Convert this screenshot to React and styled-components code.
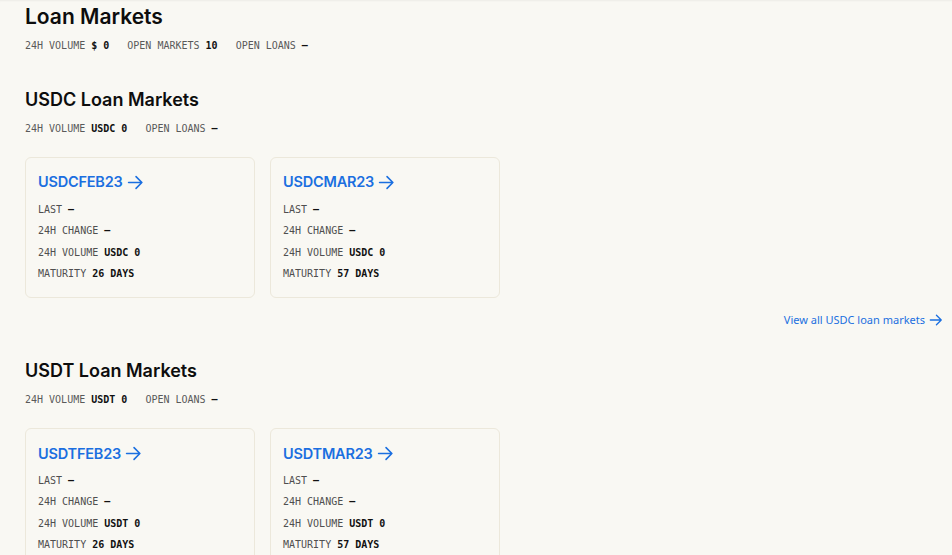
import React from "react";
import styled, { createGlobalStyle } from "styled-components";

const BLUE = "#1b6fe0";

const markets = [
  {
    coin: "USDC",
    items: [
      { name: "USDCFEB23", days: 26 },
      { name: "USDCMAR23", days: 57 },
    ],
    link: true,
  },
  {
    coin: "USDT",
    items: [
      { name: "USDTFEB23", days: 26 },
      { name: "USDTMAR23", days: 57 },
    ],
    link: false,
  },
];

const Arrow = ({ size = 16 }) => (
  <svg width={size} height={size} viewBox="0 0 16 16" fill="none">
    <path
      d="M1.5 8h12.5M8.5 2.5L14 8l-5.5 5.5"
      stroke="currentColor"
      strokeWidth="1.5"
      strokeLinecap="round"
      strokeLinejoin="round"
    />
  </svg>
);

const App = () => {
  return (
    <>
      <GlobalStyle />
      <Page>
        <PageTitle>Loan Markets</PageTitle>
        <Stats>
          <Stat>
            24H VOLUME <b>$ 0</b>
          </Stat>
          <Stat>
            OPEN MARKETS <b>10</b>
          </Stat>
          <Stat>
            OPEN LOANS <b>–</b>
          </Stat>
        </Stats>
        {markets.map((m, i) => (
          <Section key={m.coin} first={i === 0}>
            <SectionTitle>{m.coin} Loan Markets</SectionTitle>
            <Stats>
              <Stat>
                24H VOLUME <b>{m.coin} 0</b>
              </Stat>
              <Stat>
                OPEN LOANS <b>–</b>
              </Stat>
            </Stats>
            <Cards>
              {m.items.map((it) => (
                <Card key={it.name}>
                  <CardTitle>
                    {it.name}
                    <Arrow size={17} />
                  </CardTitle>
                  <Row>
                    LAST <b>–</b>
                  </Row>
                  <Row>
                    24H CHANGE <b>–</b>
                  </Row>
                  <Row>
                    24H VOLUME <b>{m.coin} 0</b>
                  </Row>
                  <Row>
                    MATURITY <b>{it.days} DAYS</b>
                  </Row>
                </Card>
              ))}
            </Cards>
            {m.link && (
              <ViewAll>
                <a>
                  View all {m.coin} loan markets
                  <Arrow size={14} />
                </a>
              </ViewAll>
            )}
          </Section>
        ))}
      </Page>
    </>
  );
};

const GlobalStyle = createGlobalStyle`
  html, body {
    margin: 0;
    background-color: #f9f8f3;
  }
  body {
    font-family: Inter, "Noto Sans", sans-serif;
    overflow: hidden;
  }
`;

const Page = styled.div`
  padding: 4px 9px 0 25px;
  min-height: 555px;
  box-sizing: border-box;
  box-shadow: inset 0 2px 2px -1px rgba(0, 0, 0, 0.05);
`;

const PageTitle = styled.h1`
  margin: 0;
  font-size: 21px;
  line-height: 26px;
  font-weight: 600;
  color: #0d0d0d;
`;

const Stats = styled.div`
  display: flex;
  gap: 18px;
  margin-top: 9px;
  font-family: "DejaVu Sans Mono", "Liberation Mono", monospace;
  font-size: 10px;
  line-height: 14px;
  color: #5a5a5a;
  b {
    color: #111;
    font-weight: 700;
  }
`;

const Stat = styled.span``;

const Section = styled.section`
  margin-top: ${(p) => (p.first ? "35px" : "30px")};
  ${Stats} {
    margin-top: 10px;
  }
`;

const SectionTitle = styled.h2`
  margin: 0;
  font-size: 18px;
  line-height: 24px;
  font-weight: 600;
  color: #0d0d0d;
`;

const Cards = styled.div`
  display: flex;
  gap: 15px;
  margin-top: 21px;
`;

const Card = styled.div`
  width: 230px;
  box-sizing: border-box;
  padding: 14px 12px 13px;
  border: 1px solid #ece8db;
  border-radius: 6px;
  background-color: #f9f8f3;
  font-family: "DejaVu Sans Mono", "Liberation Mono", monospace;
  font-size: 10px;
  line-height: 21.3px;
  color: #4f4f4f;
  b {
    color: #111;
    font-weight: 700;
  }
`;

const CardTitle = styled.div`
  display: flex;
  align-items: center;
  gap: 4px;
  height: 20px;
  margin-bottom: 7px;
  font-family: Inter, "Noto Sans", sans-serif;
  font-size: 14.5px;
  font-weight: 600;
  color: ${BLUE};
  letter-spacing: -0.2px;
`;

const Row = styled.div``;

const ViewAll = styled.div`
  display: flex;
  justify-content: flex-end;
  margin-top: 13px;
  a {
    display: flex;
    align-items: center;
    gap: 4px;
    font-family: "Noto Sans", "Open Sans", sans-serif;
    font-size: 11px;
    line-height: 18px;
    color: ${BLUE};
    cursor: pointer;
  }
`;

export default App;
